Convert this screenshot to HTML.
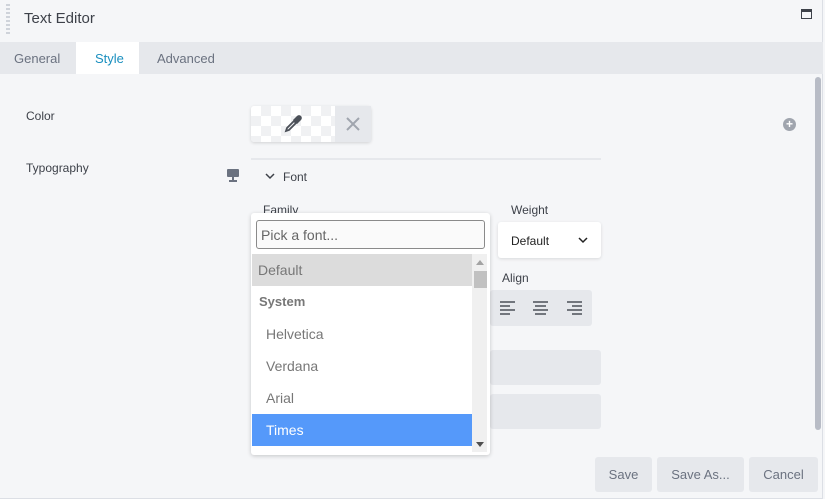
<!DOCTYPE html>
<html><head><style>
*{box-sizing:border-box;margin:0;padding:0}
body{width:825px;height:499px;background:#f5f6f8;font-family:"Liberation Sans",sans-serif;position:relative;overflow:hidden;color:#3d4149}
.a{position:absolute}
.t{font-size:13px}
</style></head><body>
<div class="a" style="left:0;top:0;width:823px;height:499px;border-right:1px solid #dcdfe5;border-bottom:1px solid #dcdfe5"></div>
<div class="a" style="left:6px;top:4px;width:4px;height:30px;background:repeating-linear-gradient(#cfd3da 0 2px,transparent 2px 4px)"></div>
<div class="a" style="left:24px;top:10px;font-size:15px;color:#3d4149">Text Editor</div>
<div class="a" style="left:801px;top:9px;width:11px;height:10px;border:1.5px solid #3d4149;border-top-width:3px"></div>
<div class="a" style="left:0;top:42px;width:823px;height:32px;background:#e6e8ec"></div>
<div class="a" style="left:76px;top:42px;width:63px;height:32px;background:#fff"></div>
<div class="a t" style="left:14px;top:51px;color:#6b7280">General</div>
<div class="a t" style="left:95px;top:51px;color:#1a8fbf">Style</div>
<div class="a t" style="left:157px;top:51px;color:#6b7280">Advanced</div>
<div class="a" style="left:815px;top:77px;width:6px;height:353px;background:#b8bcc6;border-radius:3px"></div>
<div class="a" style="left:26px;top:109px;font-size:12px">Color</div>
<div class="a" style="left:26px;top:161px;font-size:12px">Typography</div>
<div class="a" style="left:227px;top:169px;width:12px;height:8px;background:#6b7280;border-radius:1px"></div>
<div class="a" style="left:232px;top:177px;width:2px;height:3px;background:#6b7280"></div>
<div class="a" style="left:229px;top:180px;width:8px;height:2px;background:#6b7280"></div>
<div class="a" style="left:251px;top:106px;width:120px;height:36px;border-radius:3px;box-shadow:0 1px 3px rgba(0,0,0,.15);overflow:hidden;background:repeating-conic-gradient(#f0f1f3 0 25%,#fff 0 50%) 0 0/20px 20px"></div>
<div class="a" style="left:335px;top:106px;width:36px;height:36px;background:#e6e8ec"></div>
<svg class="a" style="left:346px;top:117px" width="14" height="14"><path d="M1 1l12 12M13 1L1 13" stroke="#a0a5ae" stroke-width="2"/></svg>
<svg class="a" style="left:283px;top:114px" width="20" height="20" viewBox="0 0 20 20"><path d="M3 17l1-3 7-7 2 2-7 7z" fill="none" stroke="#4b5058" stroke-width="1.8"/><path d="M10 6l4-4a2 2 0 0 1 4 4l-4 4z" fill="#4b5058"/></svg>
<div class="a" style="left:783px;top:118px;width:13px;height:13px;border-radius:50%;background:#a0a5ae;color:#fff;font-size:12px;line-height:13px;text-align:center;font-weight:bold">+</div>
<div class="a" style="left:251px;top:158px;width:350px;height:2px;background:#e6e8ec"></div>
<svg class="a" style="left:265px;top:173px" width="10" height="7"><path d="M1 1l4 4 4-4" fill="none" stroke="#3d4149" stroke-width="1.5"/></svg>
<div class="a" style="left:283px;top:170px;font-size:12px">Font</div>
<div class="a" style="left:263px;top:203px;font-size:12px">Family</div>
<div class="a" style="left:511px;top:203px;font-size:12px">Weight</div>
<div class="a" style="left:498px;top:222px;width:103px;height:36px;background:#fff;border-radius:3px;box-shadow:0 1px 3px rgba(0,0,0,.12)"></div>
<div class="a" style="left:511px;top:234px;font-size:12px;color:#222">Default</div>
<svg class="a" style="left:578px;top:237px" width="10" height="7"><path d="M1 1l4 4 4-4" fill="none" stroke="#222" stroke-width="1.5"/></svg>
<div class="a" style="left:502px;top:271px;font-size:12px">Align</div>
<div class="a" style="left:490px;top:290px;width:102px;height:36px;background:#e6e8ec;border-radius:3px"></div>
<svg class="a" style="left:500px;top:300px" width="90" height="16"><g stroke="#4b5058" stroke-width="1.6"><path d="M0 2h15M0 6h10M0 10h15M0 14h10"/><path d="M33 2h15M35 6h11M33 10h15M35 14h11"/><path d="M67 2h15M72 6h10M67 10h15M72 14h10"/></g></svg>
<div class="a" style="left:490px;top:350px;width:111px;height:35px;background:#e6e8ec;border-radius:3px"></div>
<div class="a" style="left:490px;top:394px;width:111px;height:35px;background:#e6e8ec;border-radius:3px"></div>
<div class="a" style="left:251px;top:213px;width:239px;height:242px;background:#fff;border-radius:3px;box-shadow:0 1px 4px rgba(0,0,0,.2)"></div>
<div class="a" style="left:256px;top:220px;width:229px;height:29px;border:1px solid #8a8a8a;border-radius:3px;background:#fafafa;font-size:14px;color:#666;padding:6px 4px">Pick a font...</div>
<div class="a" style="left:252px;top:254px;width:220px;height:32px;background:#dcdcdc;color:#777;font-size:14px;padding:8px 6px">Default</div>
<div class="a" style="left:259px;top:294px;font-size:13px;font-weight:bold;color:#777">System</div>
<div class="a" style="left:266px;top:326px;font-size:14px;color:#777">Helvetica</div>
<div class="a" style="left:266px;top:358px;font-size:14px;color:#777">Verdana</div>
<div class="a" style="left:266px;top:390px;font-size:14px;color:#777">Arial</div>
<div class="a" style="left:252px;top:414px;width:220px;height:32px;background:#5599fa;color:#fff;font-size:14px;padding:8px 14px">Times</div>
<div class="a" style="left:472px;top:254px;width:15px;height:198px;background:#f0f0f0"></div>
<div class="a" style="left:474px;top:271px;width:13px;height:17px;background:#c1c1c1"></div>
<div class="a" style="left:476px;top:260px;width:0;height:0;border:4px solid transparent;border-bottom:5px solid #a3a3a3;border-top:0"></div>
<div class="a" style="left:476px;top:442px;width:0;height:0;border:4px solid transparent;border-top:5px solid #505050;border-bottom:0"></div>
<div class="a t" style="left:595px;top:457px;width:57px;height:35px;background:#e6e8ec;border-radius:3px;color:#6b7280;text-align:center;line-height:35px">Save</div>
<div class="a t" style="left:657px;top:457px;width:87px;height:35px;background:#e6e8ec;border-radius:3px;color:#6b7280;text-align:center;line-height:35px">Save As...</div>
<div class="a t" style="left:749px;top:457px;width:69px;height:35px;background:#e6e8ec;border-radius:3px;color:#6b7280;text-align:center;line-height:35px">Cancel</div>
</body></html>
